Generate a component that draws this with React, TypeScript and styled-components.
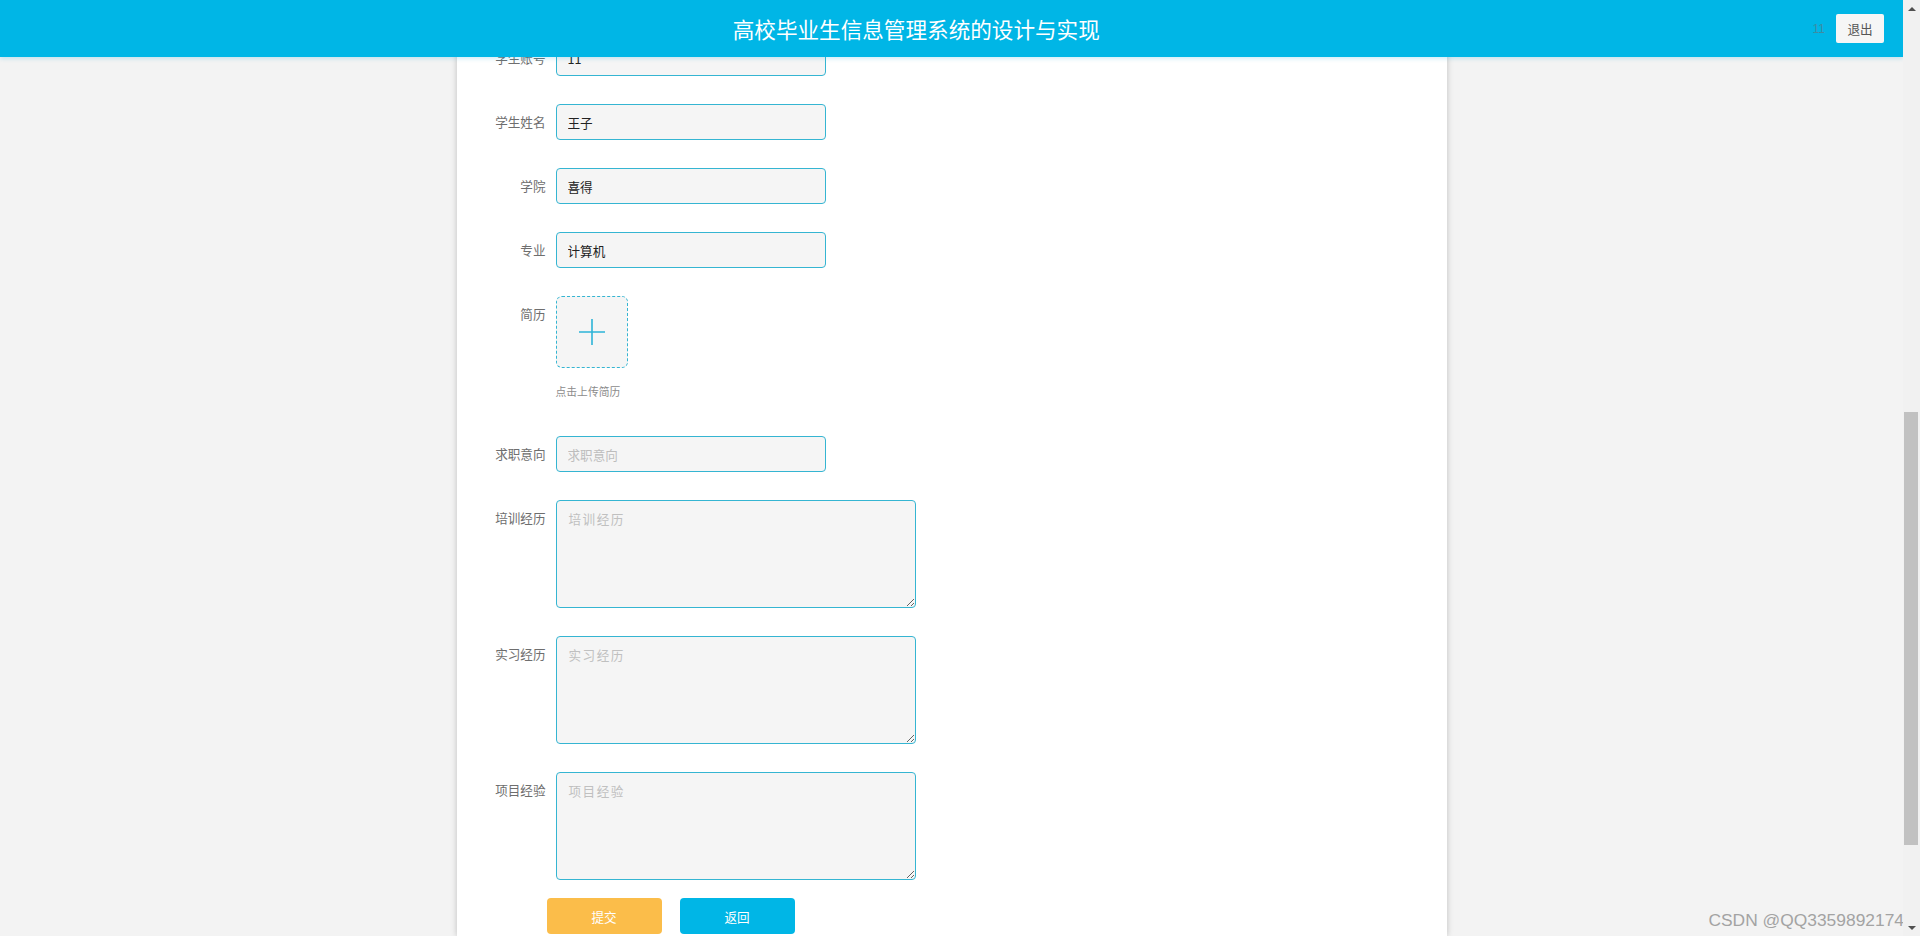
import * as React from 'react';
import styled, { createGlobalStyle } from 'styled-components';

const colorPrimary = '#00b6e6';
const colorBorder = '#35b5d2';

const inputFields = [
  { label: '学生账号', value: '11' },
  { label: '学生姓名', value: '王子' },
  { label: '学院', value: '喜得' },
  { label: '专业', value: '计算机' },
];

const textFields = ['培训经历', '实习经历', '项目经验'];

const App = () => {
  return (
    <Shell>
      <GlobalStyle />
      <Viewport>
        <Header>
          <Title>高校毕业生信息管理系统的设计与实现</Title>
          <UserBox>
            <UserName>11</UserName>
            <LogoutButton>退出</LogoutButton>
          </UserBox>
        </Header>

        <Card>
          <FieldList>
            {inputFields.map((f) => (
              <Field key={f.label}>
                <Label>{f.label}</Label>
                <TextInput value={f.value} readOnly />
              </Field>
            ))}

            <Field>
              <Label>简历</Label>
              <UploadBlock>
                <UploadBox>
                  <svg width="28" height="28" viewBox="0 0 28 28">
                    <path d="M14 1v26M1 14h26" stroke="#2db4d8" strokeWidth="1.6" fill="none" />
                  </svg>
                </UploadBox>
                <UploadTip>点击上传简历</UploadTip>
              </UploadBlock>
            </Field>

            <Field>
              <Label>求职意向</Label>
              <TextInput placeholder="求职意向" readOnly />
            </Field>

            {textFields.map((t) => (
              <Field key={t}>
                <Label>{t}</Label>
                <TextArea placeholder={t} readOnly />
              </Field>
            ))}
          </FieldList>

          <ButtonRow>
            <ActionButton $color="#fbbd4a">提交</ActionButton>
            <ActionButton $color={colorPrimary}>返回</ActionButton>
          </ButtonRow>
        </Card>

        <Watermark>CSDN @QQ3359892174</Watermark>
      </Viewport>

      <ScrollBar>
        <ArrowBox>
          <Arrow $dir="up" />
        </ArrowBox>
        <Track>
          <Thumb />
        </Track>
        <ArrowBox>
          <Arrow $dir="down" />
        </ArrowBox>
      </ScrollBar>
    </Shell>
  );
};

//------------STYLED------------
const GlobalStyle = createGlobalStyle`
  html, body {
    margin: 0;
    padding: 0;
    height: 100%;
    overflow: hidden;
  }
  body {
    font-family: "Noto Sans CJK SC", "Noto Sans", sans-serif;
    background: #f3f3f3;
  }
  #root {
    height: 100%;
  }
`;

const Shell = styled.div`
  display: flex;
  flex-direction: row;
  width: 100%;
  height: 936px;
`;

const Viewport = styled.div`
  position: relative;
  flex: 1;
  display: flex;
  justify-content: center;
  overflow: hidden;
  background: #f3f3f3;
`;

const Header = styled.div`
  position: absolute;
  top: 0;
  left: 0;
  right: 0;
  z-index: 10;
  height: 57px;
  display: flex;
  align-items: center;
  padding-right: 19px;
  background: ${colorPrimary};
  box-shadow: 0 2px 4px rgba(0, 160, 220, 0.18);
`;

const Title = styled.div`
  flex: 1;
  padding-left: 20px;
  text-align: center;
  color: #ffffff;
  font-size: 21.6px;
  line-height: 57px;
`;

const UserBox = styled.div`
  display: flex;
  align-items: center;
  gap: 11px;
`;

const UserName = styled.span`
  color: #3d8ca3;
  font-size: 12px;
  font-family: "Liberation Sans", Arial, sans-serif;
`;

const LogoutButton = styled.button`
  width: 48px;
  height: 29px;
  padding: 0;
  border: none;
  border-radius: 2px;
  background: #f6f6f6;
  color: #555555;
  font-family: inherit;
  font-size: 12.6px;
  cursor: pointer;
`;

const Card = styled.div`
  width: 990px;
  height: 100%;
  box-sizing: border-box;
  padding-top: 40px;
  background: #ffffff;
  box-shadow: 0 0 6px rgba(0, 0, 0, 0.22);
`;

const FieldList = styled.div`
  display: flex;
  flex-direction: column;
  gap: 28px;
`;

const Field = styled.div`
  display: flex;
  flex-direction: row;
  align-items: flex-start;
`;

const Label = styled.label`
  width: 99px;
  flex-shrink: 0;
  box-sizing: border-box;
  padding-right: 10px;
  text-align: right;
  color: #6e6e6e;
  font-size: 12.6px;
  line-height: 36px;
`;

const TextInput = styled.input`
  width: 270px;
  height: 36px;
  box-sizing: border-box;
  padding: 0 11px;
  border: 1px solid ${colorBorder};
  border-radius: 4px;
  background: #f5f5f5;
  color: #222222;
  font-family: inherit;
  font-size: 12.6px;
  outline: none;

  &::placeholder {
    color: #bdbdbd;
  }
`;

const TextArea = styled.textarea`
  width: 360px;
  height: 108px;
  box-sizing: border-box;
  padding: 8px 12px;
  border: 1px solid ${colorBorder};
  border-radius: 4px;
  background: #f5f5f5;
  color: #222222;
  font-family: inherit;
  font-size: 12.6px;
  letter-spacing: 1.5px;
  line-height: 20px;
  resize: vertical;
  outline: none;

  &::placeholder {
    color: #c0c0c0;
  }
`;

const UploadBlock = styled.div`
  display: flex;
  flex-direction: column;
`;

const UploadBox = styled.div`
  width: 72px;
  height: 72px;
  box-sizing: border-box;
  display: flex;
  justify-content: center;
  align-items: center;
  border: 1px dashed ${colorBorder};
  border-radius: 6px;
  background: #f5f5f5;
  cursor: pointer;
`;

const UploadTip = styled.div`
  margin-top: 7px;
  color: #8c8c8c;
  font-size: 10.8px;
  line-height: 33px;
`;

const ButtonRow = styled.div`
  display: flex;
  flex-direction: row;
  gap: 18px;
  margin-top: 18px;
  padding-left: 90px;
`;

const ActionButton = styled.button<{ $color: string }>`
  width: 115px;
  height: 36px;
  padding: 0;
  border: none;
  border-radius: 4px;
  background: ${(p) => p.$color};
  color: #ffffff;
  font-family: inherit;
  font-size: 12.6px;
  cursor: pointer;
`;

const Watermark = styled.div`
  position: absolute;
  right: -1px;
  bottom: 5px;
  color: #a3a3a3;
  font-family: "Liberation Sans", Arial, sans-serif;
  font-size: 17.4px;
  white-space: nowrap;
  pointer-events: none;
`;

const ScrollBar = styled.div`
  width: 17px;
  flex-shrink: 0;
  display: flex;
  flex-direction: column;
  background: #f1f1f1;
`;

const ArrowBox = styled.div`
  height: 17px;
  display: flex;
  justify-content: center;
  align-items: center;
`;

const Arrow = styled.div<{ $dir: 'up' | 'down' }>`
  width: 0;
  height: 0;
  border-left: 4px solid transparent;
  border-right: 4px solid transparent;
  ${(p) =>
    p.$dir === 'up'
      ? 'border-bottom: 4px solid #505050;'
      : 'border-top: 4px solid #505050;'}
`;

const Track = styled.div`
  flex: 1;
  padding-top: 395px;
`;

const Thumb = styled.div`
  height: 433px;
  margin: 0 2px 0 1px;
  background: #c1c1c1;
`;

export default App;
